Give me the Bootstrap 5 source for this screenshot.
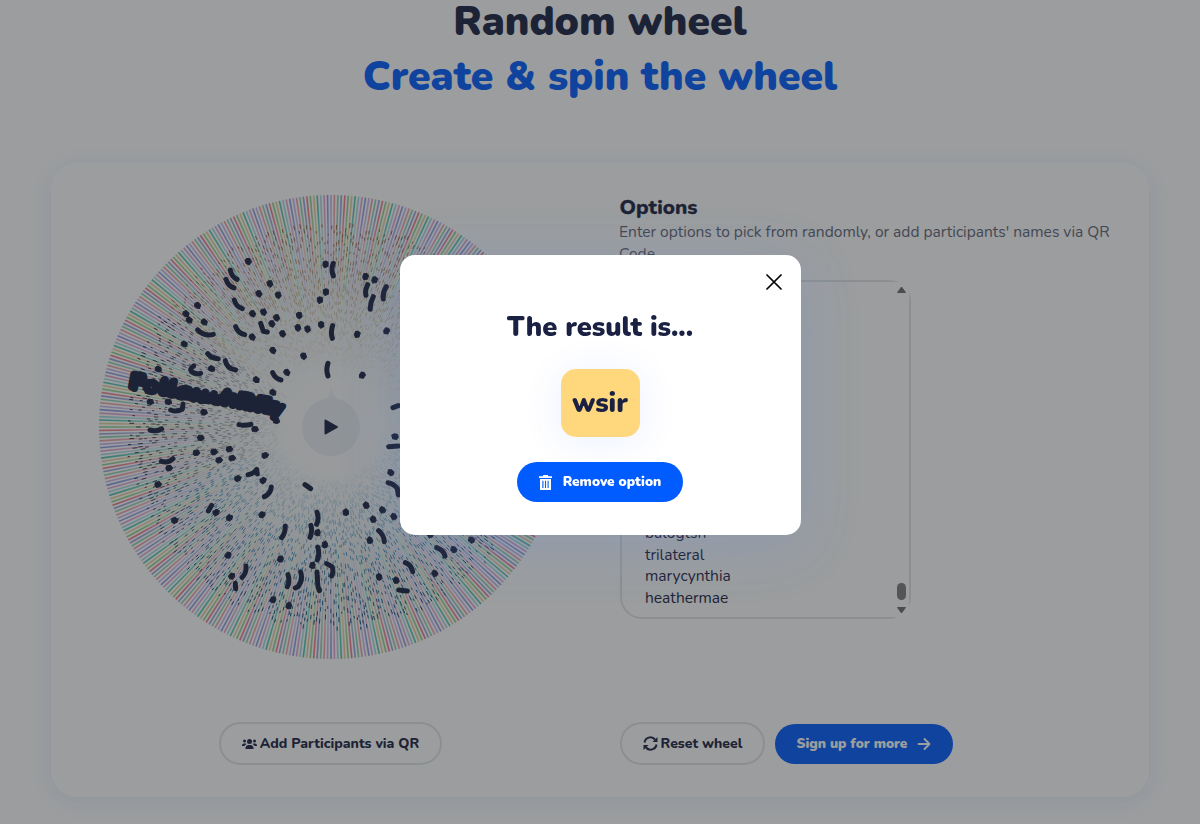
<!doctype html>
<html lang="en">
  <head>
    <meta charset="utf-8">
    <meta name="viewport" content="width=device-width, initial-scale=1">
    <title>Random wheel</title>
    <link href="https://cdn.jsdelivr.net/npm/bootstrap@5.3.3/dist/css/bootstrap.min.css" rel="stylesheet">
    <style>
      body {
        font-family: Nunito, "Open Sans", "Noto Sans", sans-serif;
        color: #1b2142;
        height: 824px;
      }
      .hero { height: 163px; }
      .hero h1 {
        font-size: 40.7px;
        font-weight: 900;
      }
      .hero .line-one { line-height: 44px; }
      .hero .line-two { line-height: 55px; padding-top: 5px; color: #005cff; }
      .panel {
        width: 1098px;
        height: 634px;
        border-radius: 26px;
        padding: 32px 32px 0 48px;
        box-shadow: 0 4px 22px rgba(0, 92, 255, .09);
      }
      .wheel-side { width: 464px; }
      .options-side { width: 500px; margin-left: 57px; }
      .options-title {
        font-size: 20.7px;
        font-weight: 800;
        line-height: 25px;
        margin-left: -.5px;
        -webkit-text-stroke: .3px currentColor;
      }
      .options-hint {
        font-size: 15.55px;
        line-height: 21.5px;
        padding-top: 1px;
        color: #5f6478;
        margin-left: -1px;
      }
      .options-box {
        width: 291px;
        height: 339px;
        border: 2px solid #e2e6ea;
        border-radius: 22px;
        padding: 0 0 9px 23px;
        font-size: 15.55px;
        line-height: 21.5px;
        margin-top: 16px;
      }
      .scroll-strip {
        top: 0;
        right: 0;
        width: 16px;
      }
      .pill {
        border-radius: 50px;
        font-size: 14px;
        font-weight: 800;
        line-height: 20px;
        white-space: nowrap;
      }
      .pill-outline {
        height: 43px;
        border: 2px solid #e2e6ea;
        color: #1b2142;
        gap: 3px;
      }
      .pill-blue {
        height: 40px;
        font-size: 13.6px;
        font-weight: 900;
        background: #005cff;
        color: #fff;
      }
      .wheel-actions { margin-top: 103px; }
      .add-participants { width: 223px; height: 43px; margin: 63px 1px 0 0; }
      .reset-wheel { width: 145px; }
      .sign-up { width: 178px; gap: 10px; margin-left: 2px; }
      .remove-option { width: 166px; gap: 11px; margin: 25px 1px 0 0; }
      .shade { background: #212529; opacity: .45; }
      .result-dialog {
        width: 401px;
        max-width: none;
        margin: 255px 0 0 400px;
      }
      .result-card {
        height: 280px;
        border: 0;
        border-radius: 15px;
        box-shadow: 0 10px 60px rgba(90, 140, 240, .2);
      }
      .result-title {
        font-size: 27.2px;
        font-weight: 900;
        line-height: 34px;
        margin: 56px 1px 0 0;
      }
      .result-value {
        width: 79px;
        height: 68px;
        border-radius: 15px;
        background: #ffd77c;
        font-size: 27px;
        font-weight: 900;
        margin: 24px 1px 0 0;
        padding-top: 2px;
        box-shadow: 0 4px 40px rgba(0, 92, 255, .09);
      }
      .close-x { top: 19px; right: 19px; }
    </style>
  </head>
  <body class="overflow-hidden bg-white">
    <header class="hero text-center">
      <h1 class="mb-0">
        <span class="line-one d-block">Random wheel</span>
        <span class="line-two d-block">Create &amp; spin the wheel</span>
      </h1>
    </header>

    <main class="panel mx-auto d-flex">
      <!-- Wheel -->
      <div class="wheel-side d-flex flex-column align-items-center">
        <svg id="wheel" width="464" height="464" viewBox="0 0 464 464">
          <defs>
            <radialGradient id="sliceFade" gradientUnits="userSpaceOnUse" cx="232" cy="232" r="232">
              <stop offset=".2" stop-color="#f9fafb" stop-opacity="1"/>
              <stop offset=".5" stop-color="#f0f4f6" stop-opacity=".92"/>
              <stop offset=".78" stop-color="#f0f4f6" stop-opacity=".5"/>
              <stop offset=".92" stop-color="#fff" stop-opacity=".05"/>
              <stop offset="1" stop-color="#fff" stop-opacity="0"/>
            </radialGradient>
            <radialGradient id="inkWarm" gradientUnits="userSpaceOnUse" cx="232" cy="232" r="232">
              <stop offset=".25" stop-color="#c8a878" stop-opacity="0"/>
              <stop offset=".6" stop-color="#b08a50" stop-opacity=".6"/>
              <stop offset=".9" stop-color="#8a4a30" stop-opacity=".9"/>
            </radialGradient>
            <radialGradient id="inkCool" gradientUnits="userSpaceOnUse" cx="232" cy="232" r="232">
              <stop offset=".2" stop-color="#6aa5c8" stop-opacity="0"/>
              <stop offset=".55" stop-color="#2f86b8" stop-opacity=".8"/>
              <stop offset=".9" stop-color="#0c3d6c" stop-opacity="1"/>
            </radialGradient>
            <radialGradient id="inkDark" gradientUnits="userSpaceOnUse" cx="232" cy="232" r="232">
              <stop offset=".2" stop-color="#555" stop-opacity="0"/>
              <stop offset=".5" stop-color="#4c4c50" stop-opacity=".5"/>
              <stop offset=".9" stop-color="#1b1b30" stop-opacity=".95"/>
            </radialGradient>
          </defs>
          <g id="slices" stroke-width="1.600"></g>
          <circle cx="232" cy="232" r="232" fill="url(#sliceFade)"/>
          <g id="names" fill="none" stroke-width="1"></g>
          <g id="blobs" fill="#1b2142" stroke="#1b2142" stroke-width="1" stroke-linejoin="round"></g>
          <g fill="none" stroke="#1b2142" stroke-width="15" stroke-linecap="round" stroke-linejoin="round">
            <path transform="translate(-9 -15) scale(.3333)" d="M421 270Q424 290 441 298M408 298Q414 318 432 324M433 360Q438 380 457 386M437 440Q444 460 464 464M323 450Q340 470 370 463M353 521Q365 536 385 536M311 558Q296 568 306 576Q318 584 332 580M406 542Q410 566 437 570M548 578Q555 596 573 600M730 250Q722 268 730 288M728 437Q721 455 727 475M714 550Q707 570 714 588M833 314Q824 330 828 346M850 350Q840 370 841 388M889 320Q878 336 880 357M512 430L520 454 532 456M242 690Q260 697 277 688L279 672M447 734Q465 738 483 733M909 683L925 677"/>
            <path transform="translate(-9 225) scale(.3333)" d="M180 30Q200 36 215 27M214 124Q235 130 249 116M474 164Q490 162 500 148L502 162M523 230Q542 222 544 201M681 276Q688 295 680 313M663 316Q668 335 660 352M586 318Q586 340 575 353M355 273L365 256M683 381Q690 400 682 420M468 438Q470 460 456 472M594 464Q600 482 592 500M632 456Q640 480 624 500L616 504M710 431L726 440Q732 455 725 468M681 456Q682 480 684 500L688 512M866 332Q882 345 883 365M894 188Q910 190 922 205L925 225M926 510L952 513M436 490L437 506M645 194L662 206M896 80L925 78"/>
            <path transform="translate(291 305) scale(.3333)" d="M140 143Q160 150 165 168M46 188Q65 195 68 215"/>
          </g>
          <!-- The name under the pointer, with its neighbours crowding the end of it -->
          <g transform="rotate(10.400 29 185)" fill="#1b2142" stroke="#1b2142" stroke-linejoin="round" font-weight="900">
            <text x="30" y="193" font-size="24" stroke-width="3" textLength="158" lengthAdjust="spacingAndGlyphs">FollowARFy</text>
            <text x="33" y="194" font-size="22" stroke-width="3" textLength="78" lengthAdjust="spacingAndGlyphs">Follow</text>
            <text x="86" y="193" font-size="19" stroke-width="3" textLength="96" lengthAdjust="spacingAndGlyphs">owARE</text>
          </g>
          <path d="M232 192C234 202 238 205 243 208H221C226 205 230 202 232 192Z" fill="#eff2f7"/>
          <circle cx="232" cy="232" r="29" fill="#ebeff5"/>
          <path d="M226.500 225.500L238 232 226.500 238.500Z" fill="#1b2142" stroke="#1b2142" stroke-width="2" stroke-linejoin="round"/>
        </svg>
        <button type="button" class="btn pill pill-outline add-participants d-flex align-items-center justify-content-center p-0">
          <svg width="15" height="12" viewBox="0 0 30 24" fill="currentColor">
            <circle cx="15" cy="7" r="5"/><circle cx="5" cy="6" r="3"/><circle cx="25" cy="6" r="3"/>
            <path d="M7 22v-3a6 6 0 0 1 6-5h4a6 6 0 0 1 6 5v3ZM0 16v-2a4 4 0 0 1 4-3h3q2 0 2 1-3 2-4 4ZM30 16v-2a4 4 0 0 0-4-3h-3q-2 0-2 1 3 2 4 4Z"/>
          </svg>
          <span>Add Participants via QR</span>
        </button>
      </div>

      <!-- Options -->
      <div class="options-side d-flex flex-column">
        <h2 class="options-title mb-0">Options</h2>
        <p class="options-hint mb-0">Enter options to pick from randomly, or add participants' names via QR<br>Code.</p>
        <div class="options-box position-relative d-flex flex-column justify-content-end">
          <div>balogtsh</div>
          <div>trilateral</div>
          <div>marycynthia</div>
          <div>heathermae</div>
          <svg class="scroll-strip position-absolute" height="335" viewBox="0 0 16 335">
            <path d="M0-2H17V9H16V326H17V337H0Z" fill="#fff"/>
            <path d="M8.500 5L12.500 10.500H4.500ZM8.500 331L12.500 325.500H4.500Z" fill="#6d6d6d" stroke="#6d6d6d" stroke-linejoin="round"/>
            <rect x="4" y="301" width="9" height="17" rx="4.500" fill="#7c7c7c"/>
          </svg>
        </div>
        <div class="wheel-actions d-flex align-items-center gap-2">
          <button type="button" class="btn pill pill-outline reset-wheel d-flex align-items-center justify-content-center p-0">
            <svg width="15" height="15" viewBox="0 0 30 30" fill="none" stroke="currentColor" stroke-width="4">
              <path d="M3 13A12 12 0 0 1 24 7M27 17A12 12 0 0 1 6 23"/>
              <path d="M29 2V12H19ZM1 28V18H11Z" fill="currentColor" stroke="none"/>
            </svg>
            <span>Reset wheel</span>
          </button>
          <button type="button" class="btn pill pill-blue sign-up border-0 d-flex align-items-center justify-content-center p-0">
            <span>Sign up for more</span>
            <svg width="14" height="14" viewBox="0 0 14 14" fill="none" stroke="currentColor" stroke-width="1.900" stroke-linecap="round" stroke-linejoin="round">
              <path d="M1.500 7H12.500M7.500 2L12.500 7 7.500 12"/>
            </svg>
          </button>
        </div>
      </div>
    </main>

    <!-- Result dialog -->
    <div class="shade position-fixed top-0 start-0 w-100 h-100"></div>
    <div class="modal d-block overflow-hidden" tabindex="-1">
      <div class="modal-dialog result-dialog">
        <div class="modal-content result-card align-items-center">
          <svg class="close-x position-absolute" width="16" height="16" viewBox="0 0 16 16" fill="none" stroke="#000" stroke-width="1.700" stroke-linecap="round">
            <path d="M1 1L15 15M15 1L1 15"/>
          </svg>
          <h2 class="result-title">The result is...</h2>
          <div class="result-value d-flex align-items-center justify-content-center">wsir</div>
          <button type="button" class="btn pill pill-blue remove-option border-0 d-flex align-items-center justify-content-center p-0">
            <svg width="13" height="15" viewBox="0 0 13 15">
              <path d="M4 0H9V1.200H13V3H0V1.200H4ZM1 4H12V15H1Z" fill="#fff"/>
              <path d="M3.900 5.800V13M6.500 5.800V13M9.100 5.800V13" stroke="#005cff" stroke-width="1.100"/>
            </svg>
            <span>Remove option</span>
          </button>
        </div>
      </div>
    </div>

    <script>
      const NS = 'http://www.w3.org/2000/svg';
      const C = 232;
      const COUNT = 420;
      const colors = ['#f07a8a', '#93d08a', '#e8cf95', '#52c4ae', '#a3dbe3', '#e3a4d2', '#8f9be6', '#c9b8f0', '#f0a0a8', '#8fd0b0', '#9aa4dc'];

      // Small seeded generator, so that the wheel looks the same on every load
      let seed = 17;
      function rnd() {
        seed = (seed * 16807) % 2147483647;
        return seed / 2147483647;
      }

      function add(parent, tag, attrs) {
        const el = document.createElementNS(NS, tag);
        for (const key in attrs) el.setAttribute(key, attrs[key]);
        document.getElementById(parent).appendChild(el);
      }

      function ray(angle, from, to) {
        const x = Math.cos(angle), y = Math.sin(angle);
        return `M${C + x * from} ${C + y * from}L${C + x * to} ${C + y * to}`;
      }

      for (let i = 0; i < COUNT; i++) {
        const angle = i / COUNT * Math.PI * 2;
        add('slices', 'path', { d: ray(angle, 232, 30), stroke: colors[i % colors.length] });

        // Letters of the names, squeezed into short strokes
        let d = '';
        for (let r = 206 - rnd() * 14; r > 55; r -= 5 + rnd() * 9) {
          if (rnd() < .8) d += ray(angle + (rnd() - .5) * .008, r, r - 2 - rnd() * 3);
        }
        const deg = angle * 180 / Math.PI;
        const ink = deg < 160 && deg > 10 ? 'inkCool' : deg < 215 && deg >= 160 ? 'inkDark' : 'inkWarm';
        add('names', 'path', { d: d, stroke: `url(#${ink})` });
      }

      const dots = [
        [-9, -15, '475,244 707,253 827,290 854,300 540,311 507,341 565,345 708,336 690,360 323,376 288,401 298,420 343,426 488,401 521,396 560,413 546,431 628,406 624,443 653,447 578,461 694,434 487,471 283,492 802,463 890,453 549,511 641,528 591,577 817,586 499,599 365,566 205,567 181,665 235,665 342,696 549,637 559,722'],
        [-9, 225, '495,27 332,53 319,98 372,95 387,120 418,87 426,114 525,106 237,144 204,193 443,175 519,181 378,277 418,293 516,284 254,301 414,405 425,468 571,417 682,338 704,374 667,436 549,539 596,557 767,277 828,256 877,270 849,298 911,290 839,361 867,471 918,481 915,50 902,158'],
        [291, 305, '244,120 191,149 134,220 120,104']
      ];
      dots.forEach(([ox, oy, list]) => {
        list.split(' ').forEach((pair) => {
          const [x, y] = pair.split(',').map((n) => n / 3);
          const px = ox + x, py = oy + y;
          const turn = Math.atan2(py - C, px - C) * 180 / Math.PI;
          add('blobs', 'path', {
            d: 'M-3.500-1L-1-2.800 2.300-2.500 3.300 0 2 2.500-2 2.300Z',
            transform: `translate(${px} ${py}) rotate(${turn})`
          });
        });
      });
    </script>
    <script src="https://cdn.jsdelivr.net/npm/bootstrap@5.3.3/dist/js/bootstrap.bundle.min.js"></script>
  </body>
</html>
